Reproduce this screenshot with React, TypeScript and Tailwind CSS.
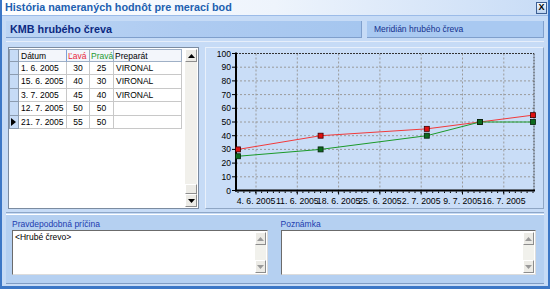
import React from "react";

const rows = [
  { date: "1. 6. 2005", l: 30, p: 25, prep: "VIRONAL" },
  { date: "15. 6. 2005", l: 40, p: 30, prep: "VIRONAL" },
  { date: "3. 7. 2005", l: 45, p: 40, prep: "VIRONAL" },
  { date: "12. 7. 2005", l: 50, p: 50, prep: "" },
  { date: "21. 7. 2005", l: 55, p: 50, prep: "" },
];

const days = [0, 14, 32, 41, 50];
const dates = ["4. 6. 2005", "11. 6. 2005", "18. 6. 2005", "25. 6. 2005", "2. 7. 2005", "9. 7. 2005", "16. 7. 2005"];

const px = (d: number) => 32 + d * 5.9;
const py = (v: number) => 142.5 - v * 1.37;
const AX = 142.5;
const TOP = py(100);

function Arrow({ up, dim }: { up?: boolean; dim?: boolean }) {
  return (
    <svg width="7" height="4" viewBox="0 0 7 4">
      <path d={up ? "M0 4 L3.5 0 L7 4 Z" : "M0 0 L3.5 4 L7 0 Z"} fill={dim ? "#9a9a9a" : "#000"} />
    </svg>
  );
}

function ScrollBtn({ up, dim }: { up?: boolean; dim?: boolean }) {
  return (
    <div className="h-[13px] flex items-center justify-center bg-[#ecebe6] border border-t-white border-l-white border-r-[#8d8d8d] border-b-[#8d8d8d]">
      <Arrow up={up} dim={dim} />
    </div>
  );
}

function Chart() {
  const red = rows.map((r, i) => `${px(days[i])},${py(r.l)}`).join(" ");
  const green = rows.map((r, i) => `${px(days[i])},${py(r.p)}`).join(" ");
  return (
    <svg width="336" height="162" viewBox="0 0 336 162" className="block">
      {[10, 20, 30, 40, 50, 60, 70, 80, 90].map((v) => (
        <line key={v} x1="30" x2="328" y1={py(v)} y2={py(v)} stroke="#9a9a9a" strokeDasharray="2 2" />
      ))}
      {dates.map((_, i) => (
        <line key={i} x1={50 + i * 41.3} x2={50 + i * 41.3} y1={TOP} y2={AX} stroke="#9a9a9a" strokeDasharray="2 2" />
      ))}
      <line x1="30" x2="328" y1={TOP} y2={TOP} stroke="#333" strokeDasharray="2 1" />
      <line x1="328" x2="328" y1={TOP} y2={AX} stroke="#333" strokeDasharray="2 1" />
      <line x1="30" x2="30" y1={TOP - 1} y2={AX + 1} stroke="#000" strokeWidth="2" />
      <line x1="29" x2="329" y1={AX} y2={AX} stroke="#000" strokeWidth="2" />
      {Array.from({ length: 51 }).map((_, d) => (
        <line key={d} x1={px(d)} x2={px(d)} y1={AX + 1} y2={AX + 2.5} stroke="#000" />
      ))}
      {dates.map((_, i) => (
        <line key={i} x1={50 + i * 41.3} x2={50 + i * 41.3} y1={AX + 1} y2={AX + 4} stroke="#000" />
      ))}
      {[0, 10, 20, 30, 40, 50, 60, 70, 80, 90, 100].map((v) => (
        <g key={v}>
          <line x1="26" x2="30" y1={py(v)} y2={py(v)} stroke="#000" />
          <text x="25" y={py(v) + 3} textAnchor="end" fontSize="8.5" fill="#000" fontFamily="Liberation Sans, Arial, sans-serif">
            {v}
          </text>
        </g>
      ))}
      {dates.map((d, i) => (
        <text key={d} x={50 + i * 41.3} y={AX + 13} textAnchor="middle" fontSize="8.7" fill="#000" fontFamily="Liberation Sans, Arial, sans-serif">
          {d}
        </text>
      ))}
      <polyline points={red} fill="none" stroke="#f23a3a" strokeWidth="1" />
      <polyline points={green} fill="none" stroke="#1b9a2a" strokeWidth="1" />
      {rows.map((r, i) => (
        <rect key={"r" + i} x={px(days[i]) - 2.5} y={py(r.l) - 2.5} width="5" height="5" fill="#e01010" stroke="#3a0000" strokeWidth="0.8" />
      ))}
      {rows.map((r, i) => (
        <rect key={"g" + i} x={px(days[i]) - 2.5} y={py(r.p) - 2.5} width="5" height="5" fill="#0d6a1e" stroke="#06210a" strokeWidth="0.8" />
      ))}
    </svg>
  );
}

function TextBox({ label, value }: { label: string; value?: string }) {
  return (
    <div className="flex flex-col flex-1">
      <div className="h-[15px] pt-[4px] leading-[10px] text-[8.5px] text-[#1c3caf]">{label}</div>
      <div className="h-[45px] flex bg-white border border-t-[#6b6b6b] border-l-[#6b6b6b] border-r-[#dcdcdc] border-b-[#dcdcdc]">
        <div className="flex-1 px-[2px] pt-[1px] text-[8.5px] leading-[11px] text-black">{value}</div>
        <div className="w-[11px] my-[1px] mr-[1px] flex flex-col justify-between bg-[#f1f1ec]">
          <ScrollBtn up dim />
          <ScrollBtn dim />
        </div>
      </div>
    </div>
  );
}

export default function App() {
  return (
    <div className="w-[550px] h-[289px] overflow-hidden flex flex-col bg-[#c6dbf6] border-x-2 border-b-[3px] border-[#3c77c6] font-['Liberation_Sans',Arial,sans-serif]">
      {/* title bar */}
      <div className="h-[16px] shrink-0 flex items-center justify-between pl-[3px] pr-[1px] bg-gradient-to-r from-white via-[#eef4fc] to-[#c8dcf6] border-b border-[#9bbbe8]">
        <span className="text-[10.8px] font-bold text-[#2160b0] leading-none">História nameraných hodnôt pre merací bod</span>
        <div className="w-[11px] h-[12px] flex items-center justify-center bg-gradient-to-b from-[#f4f8fd] to-[#bcd3f0] border border-[#3d5f93] text-[9px] font-bold leading-none text-black">
          X
        </div>
      </div>

      <div className="flex flex-col flex-1 px-[4px]">
        {/* header strips */}
        <div className="flex gap-[5px] mt-[5px] h-[17px]">
          <div className="w-[356px] flex items-center pl-[4px] bg-gradient-to-r from-[#bcd5f4] via-[#aecbf1] to-[#a5c6ef] border-b border-r border-[#7f9fcc]">
            <span className="text-[10.8px] font-bold text-[#0c2a82] leading-none">KMB hrubého čreva</span>
          </div>
          <div className="flex-1 flex items-center pl-[7px] bg-[#a9c9f1] border-b border-r border-[#7f9fcc]">
            <span className="text-[8.5px] text-[#14318f] leading-none">Meridián hrubého čreva</span>
          </div>
        </div>

        {/* main */}
        <div className="flex h-[172px] mt-[3px] pt-[5px] pb-[3px] border-t border-[#e6eefa] border-b border-b-[#8ea7c8]">
          <div className="w-[191px] ml-[2px] flex bg-white border border-[#7b8ba0]">
            <div className="flex-1 flex flex-col">
              <div className="flex h-[13px] mt-[1px] text-[8.5px] leading-[12px] text-black">
                <div className="w-[10px] bg-[#c6dbf6] border border-[#8c9cb0]" />
                <div className="w-[48px] pl-[2px] bg-[#f3f6fb] border-y border-r border-[#9fb0c6] border-r-[#7ea0d8]">Dátum</div>
                <div className="w-[23px] pl-[1px] bg-[#f3f6fb] border-y border-r border-[#9fb0c6] text-[#e8283a]">Ľavá</div>
                <div className="w-[24px] pl-[1px] bg-[#f3f6fb] border-y border-r border-[#9fb0c6] text-[#1f9a33]">Pravá</div>
                <div className="w-[68px] pl-[1px] bg-[#f3f6fb] border-y border-r border-[#9fb0c6]">Preparát</div>
              </div>
              {rows.map((r, i) => (
                <div key={r.date} className="flex h-[13.4px] text-[8.5px] leading-[12px] text-black">
                  <div className="w-[10px] flex items-center bg-[#c6dbf6] border-x border-b border-[#8c9cb0]">
                    {i === rows.length - 1 && (
                      <svg width="5" height="8" viewBox="0 0 5 8" className="ml-[1px]">
                        <path d="M0 0 L5 4 L0 8 Z" fill="#000" />
                      </svg>
                    )}
                  </div>
                  <div className="w-[48px] pl-[2px] border-b border-r border-[#c8c8c8]">{r.date}</div>
                  <div className="w-[23px] text-center border-b border-r border-[#c8c8c8]">{r.l}</div>
                  <div className="w-[24px] text-center border-b border-r border-[#c8c8c8]">{r.p}</div>
                  <div className="w-[68px] pl-[2px] border-b border-r border-[#c8c8c8]">{r.prep}</div>
                </div>
              ))}
            </div>
            <div className="w-[12px] mt-[1px] mb-[1px] mr-[1px] flex flex-col bg-[#f1f0eb]">
              <ScrollBtn up />
              <div className="flex-1" />
              <div className="h-[10px] bg-[#ecebe6] border border-t-white border-l-white border-r-[#8d8d8d] border-b-[#8d8d8d]" />
              <ScrollBtn />
            </div>
          </div>
          <div className="ml-[6px] flex-1 bg-[#c9ddf7] border border-[#e8f0fb] border-r-[#8fa6c4] border-b-[#8fa6c4]">
            <Chart />
          </div>
        </div>

        {/* bottom panel */}
        <div className="flex gap-[13px] h-[70px] mt-[1px] pl-[6px] pr-[8px] bg-[#b5d0f1] border-t border-white border-b border-b-[#7f9cc4]">
          <TextBox label="Pravdepodobná príčina" value="<Hrubé črevo>" />
          <TextBox label="Poznámka" />
        </div>
      </div>
    </div>
  );
}
